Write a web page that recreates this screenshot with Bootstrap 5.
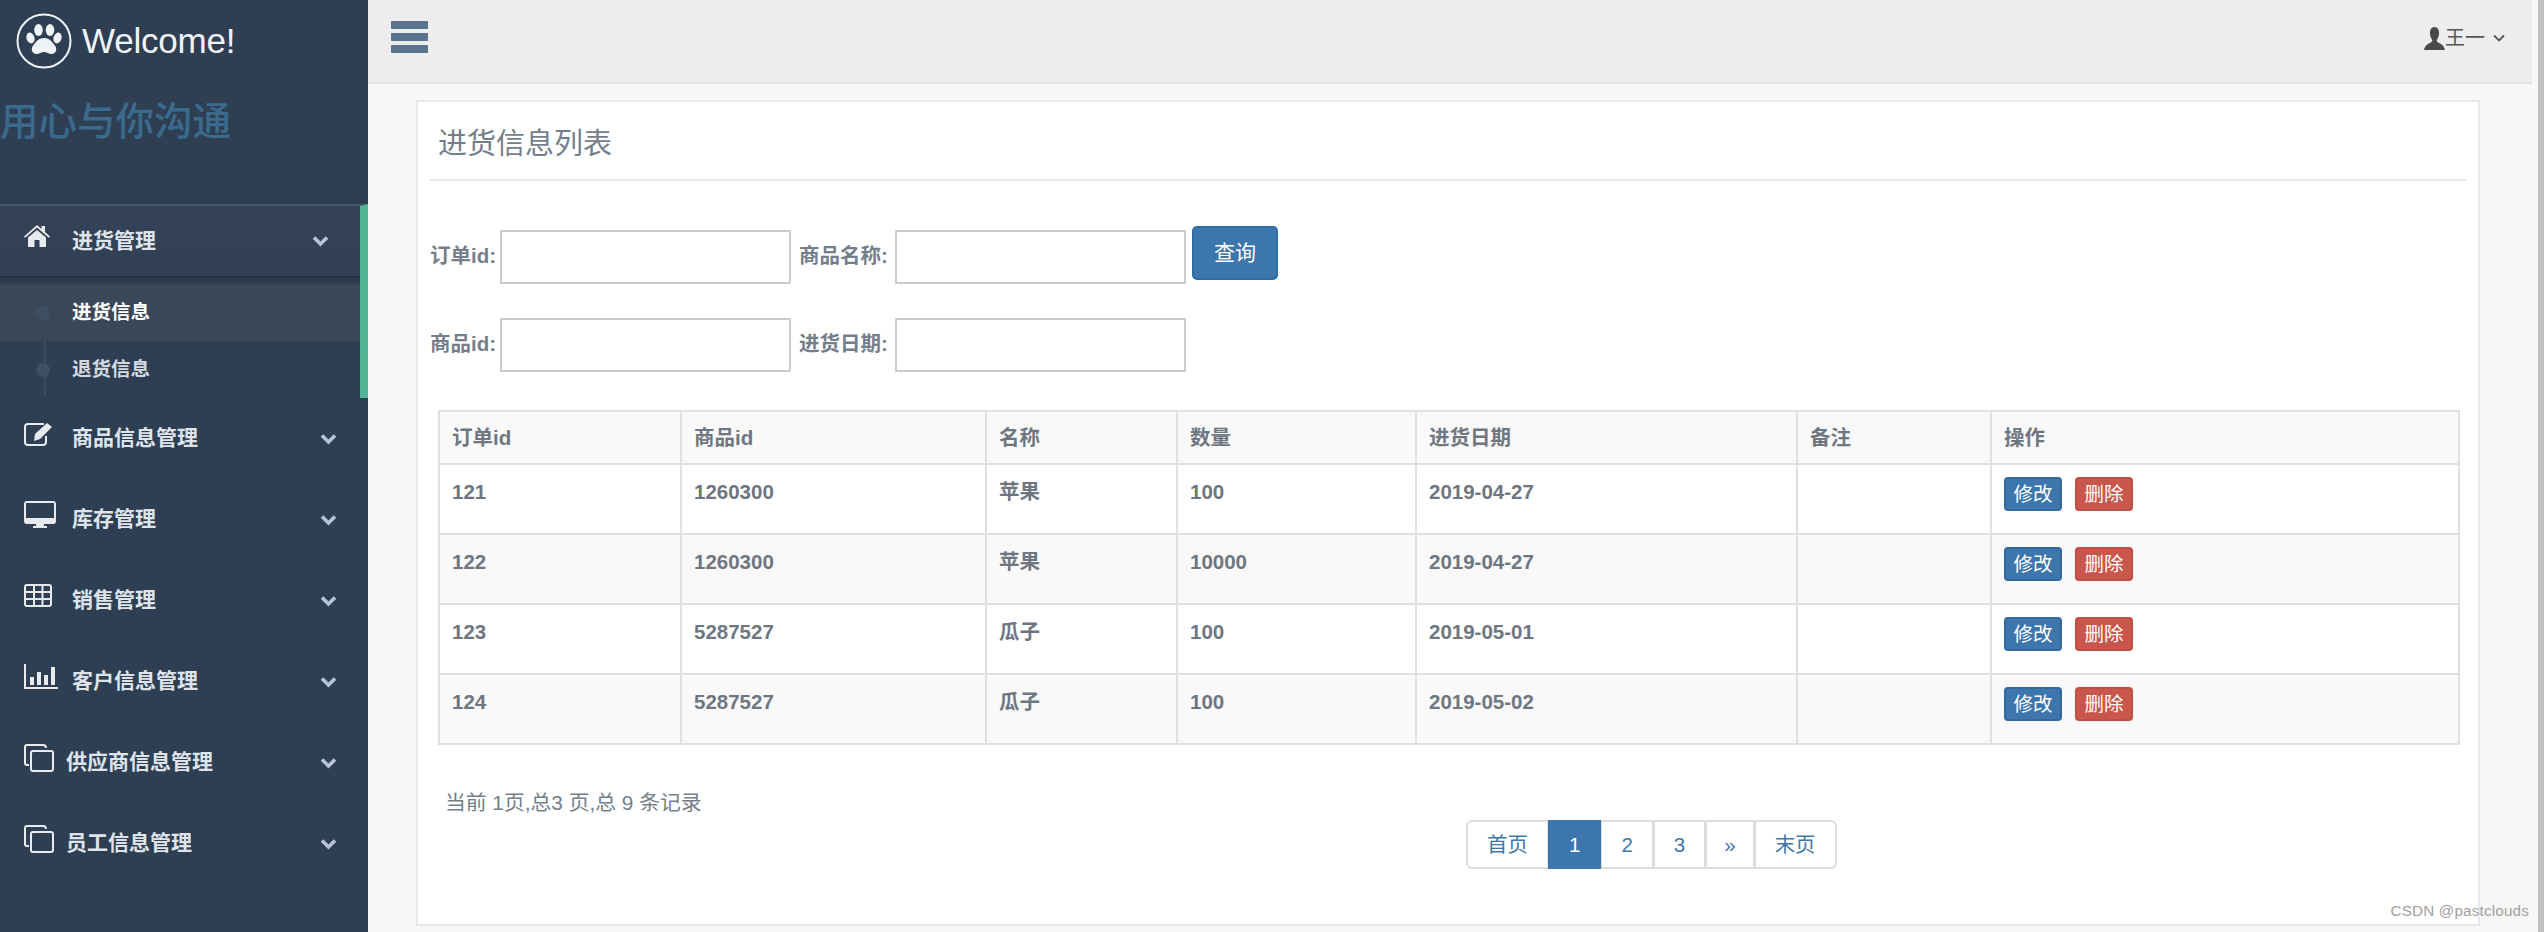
<!DOCTYPE html>
<html lang="zh-CN">
<head>
  <meta charset="UTF-8">
  <meta name="viewport" content="width=device-width, initial-scale=1">
  <title>进货信息列表</title>
  <link href="https://cdn.jsdelivr.net/npm/bootstrap@5.3.0/dist/css/bootstrap.min.css" rel="stylesheet">
  <style>
    html, body { height: 100%; }
    body {
      font-family: "Liberation Sans", "Noto Sans CJK SC", sans-serif;
      background: #f7f7f7;
      color: #747f8b;
      overflow: hidden;
    }
    .app-shell { height: 932px; }
    .side-col { width: 368px; background: #2e3f53; flex: none; }
    .brand-row { height: 82px; padding-left: 16px; gap: 10px; }
    .brand-name { font-size: 35px; color: #eef3f8; letter-spacing: -.2px; }
    .motto { height: 122px; margin: 0; padding-top: 13px; font-size: 38.5px; line-height: 54px; color: #3c6a8c; }
    .menu-open { border-top: 2px solid #47566a; border-right: 8px solid #52b596; height: 194px; }
    .menu-head {
      height: 72px; padding-left: 24px; padding-right: 31px;
      background: linear-gradient(#344357, #303f53);
      border-bottom: 2px solid #233245;
      box-shadow: 0 4px 0 #2b3a4d;
    }
    .menu-row { height: 81px; padding-left: 24px; padding-right: 31px; }
    .menu-label { font-size: 21px; font-weight: 700; color: #dfe4ea; line-height: 30px; }
    .menu-row .menu-label { margin-top: -2px; }
    .menu-ico { flex: none; margin-top: -10px; color: #e7eaee; }
    .ico-wide { width: 48px; }
    .ico-narrow { width: 42px; }
    .chev { flex: none; color: #b6c4d6; }
    .sub-list { position: relative; padding-top: 6px; }
    .sub-list::before { content: ""; position: absolute; left: 44px; top: 6px; bottom: 2px; width: 2px; background: #3b4b5f; }
    .sub-item { height: 57px; position: relative; padding-left: 72px; font-size: 19.5px; font-weight: 700; color: #d3d9e0; }
    .sub-item::before { content: ""; position: absolute; left: 36px; top: 50%; width: 14px; height: 14px; margin-top: -7px; border-radius: 50%; background: #3f4f63; }
    .sub-on { background: #3a4759; color: #fff; }
    .main-col { min-width: 0; }
    .top-strip { height: 84px; background: #ededed; border-bottom: 2px solid #dfe2e6; padding: 0 27px 0 23px; }
    .burger { width: 37px; gap: 4px; margin-top: -8px; }
    .burger span { display: block; height: 8px; background: #5a738e; border-radius: 1px; }
    .user-box { font-size: 20px; color: #555; margin-top: -6px; }
    .list-panel { margin: 16px 52px 0 48px; height: 826px; background: #fff; border: 2px solid #e6e9ed; padding: 0 12px; }
    .panel-title { height: 79px; border-bottom: 2px solid #e6e9ed; font-size: 29px; padding-left: 8px; padding-top: 8px; margin: 0; font-weight: 400; line-height: 1.2; }
    .filter-row { gap: 4px; }
    .filter-row label { font-size: 20.5px; font-weight: 700; width: 66px; white-space: nowrap; margin-right: 0; margin-top: -2px; }
    .filter-row label.lbl-long { width: 92px; }
    .filter-row input { width: 291px; height: 54px; border: 2px solid #ccc; background: #fff; border-radius: 1px; }
    .first-filter { margin-top: 49px; height: 54px; }
    .second-filter { margin-top: 34px; height: 54px; }
    .input-gap { margin-right: 4px; }
    .query-btn { width: 86px; height: 54px; font-size: 21px; margin-top: -8px; margin-left: 2px; padding: 0; background: #3c76ad; border: 2px solid #2e6da4; border-radius: 5px; }
    .goods-table { width: 2022px; margin: 38px 0 0 8px; table-layout: fixed; border-collapse: collapse; border: 2px solid #ddd; }
    .goods-table th, .goods-table td { border: 2px solid #e0e0e0; font-size: 20.5px; font-weight: 700; line-height: 30px; color: #6e7781; }
    .goods-table th { height: 53px; padding: 0 12px; background: #f9f9f9; vertical-align: middle; }
    .goods-table td { height: 70px; padding: 12px; vertical-align: top; background: #fff; }
    .goods-table tbody tr:nth-child(even) td { background: #f9f9f9; }
    .goods-table th:nth-child(1) { width: 242px; }
    .goods-table th:nth-child(2) { width: 305px; }
    .goods-table th:nth-child(3) { width: 191px; }
    .goods-table th:nth-child(4) { width: 239px; }
    .goods-table th:nth-child(5) { width: 381px; }
    .goods-table th:nth-child(6) { width: 194px; }
    .act-btn { width: 58px; height: 34px; padding: 0; font-size: 19.5px; line-height: 30px; border-radius: 4px; display: inline-block; vertical-align: top; }
    .act-edit { background: #3c76ad; border: 2px solid #35699b; margin-right: 13px; }
    .act-del { background: #c9564c; border: 2px solid #c14e45; }
    .page-info { margin: 43px 0 0 15px; font-size: 20.8px; line-height: 30px; }
    .pager-wrap { padding-left: 1036px; margin-top: 2px; }
    .pager-wrap .pagination {
      --bs-pagination-padding-x: 19px;
      --bs-pagination-padding-y: 8px;
      --bs-pagination-font-size: 20.5px;
      --bs-pagination-color: #3f77a8;
      --bs-pagination-border-color: #ddd;
      --bs-pagination-border-width: 2px;
      --bs-pagination-active-bg: #3c76ad;
      --bs-pagination-active-border-color: #3c76ad;
      --bs-pagination-border-radius: 6px;
      margin: 0;
    }
    .pager-wrap .page-link { height: 49px; line-height: 29px; }
    .pager-wrap .page-item:nth-child(5) .page-link { padding-left: 17px; padding-right: 17px; }
    .scroll-edge { width: 12px; flex: none; background: #f7f7f7; border-right: 6px solid #c0c0c0; }
    .mark-csdn { position: absolute; right: 15px; bottom: 9px; font-size: 15.2px; color: #a0a0a0; letter-spacing: .2px; }
  </style>
</head>
<body>

<div class="app-shell d-flex position-relative">

  <!-- Sidebar -->
  <aside class="side-col d-flex flex-column">
    <div class="brand-row d-flex align-items-center">
      <svg width="56" height="56" viewBox="0 0 56 56">
        <circle cx="28" cy="28" r="26.5" fill="none" stroke="#eef3f8" stroke-width="2"/>
        <g fill="#eef3f8">
          <ellipse cx="14.5" cy="25" rx="4" ry="5.5" transform="rotate(-18 14.5 25)"/>
          <ellipse cx="22.5" cy="17" rx="4.300" ry="6"/>
          <ellipse cx="34" cy="17" rx="4.300" ry="6"/>
          <ellipse cx="41.500" cy="25" rx="4" ry="5.5" transform="rotate(18 41.500 25)"/>
          <path d="M28 25c-6 0-8 4-10.500 7-3 3-2 9 3 9 3 0 4.500-2 7.500-2s4.500 2 7.500 2c5 0 6-6 3-9-2.500-3-4.500-7-10.500-7z"/>
        </g>
      </svg>
      <span class="brand-name">Welcome!</span>
    </div>
    <h2 class="motto">用心与你沟通</h2>

    <div class="menu-open">
      <div class="menu-head d-flex align-items-center">
        <svg class="menu-ico ico-wide" width="48" height="22" viewBox="0 0 48 22" fill="currentColor"><path d="M13 0 0 11.500l1.200 1.300L13 2.600l11.800 10.200 1.200-1.300L21 7V1h-3.500v3z"/><path d="M13 5 4 12.500V22h6.500v-7h5v7H22v-9.500z"/></svg>
        <span class="menu-label flex-grow-1">进货管理</span>
        <svg class="chev" width="17" height="12" viewBox="0 0 17 12"><path d="M2 2.500l6.500 6.500L15 2.500" fill="none" stroke="currentColor" stroke-width="3.600"/></svg>
      </div>
      <div class="sub-list">
        <div class="sub-item sub-on d-flex align-items-center">进货信息</div>
        <div class="sub-item d-flex align-items-center">退货信息</div>
      </div>
    </div>

    <div class="menu-row d-flex align-items-center">
      <span class="ico-wide menu-ico d-flex"><svg width="30" height="25" viewBox="0 0 30 25" fill="none" stroke="currentColor" stroke-width="2"><path d="M20 3H4a3 3 0 0 0-3 3v15a3 3 0 0 0 3 3h15a3 3 0 0 0 3-3v-6"/><path d="M11 13 23 2l5 4-12 12-6 2z" fill="currentColor" stroke="none"/></svg></span>
      <span class="menu-label flex-grow-1">商品信息管理</span>
      <svg class="chev" width="17" height="12" viewBox="0 0 17 12"><path d="M2 2.500l6.500 6.500L15 2.500" fill="none" stroke="currentColor" stroke-width="3.600"/></svg>
    </div>
    <div class="menu-row d-flex align-items-center">
      <span class="ico-wide menu-ico d-flex"><svg width="32" height="27" viewBox="0 0 32 27"><path d="M3 0h26a3 3 0 0 1 3 3v17a3 3 0 0 1-3 3H20v2h3v2H9v-2h3v-2H3a3 3 0 0 1-3-3V3a3 3 0 0 1 3-3z" fill="currentColor"/><rect x="2" y="2" width="28" height="15" fill="#2e3f53"/></svg></span>
      <span class="menu-label flex-grow-1">库存管理</span>
      <svg class="chev" width="17" height="12" viewBox="0 0 17 12"><path d="M2 2.500l6.500 6.500L15 2.500" fill="none" stroke="currentColor" stroke-width="3.600"/></svg>
    </div>
    <div class="menu-row d-flex align-items-center">
      <span class="ico-wide menu-ico d-flex"><svg width="28" height="23" viewBox="0 0 28 23" fill="none" stroke="currentColor" stroke-width="2"><rect x="1" y="1" width="26" height="21" rx="2"/><path d="M1 8h26M1 15h26M10 1V22M18.500 1V22"/></svg></span>
      <span class="menu-label flex-grow-1">销售管理</span>
      <svg class="chev" width="17" height="12" viewBox="0 0 17 12"><path d="M2 2.500l6.500 6.500L15 2.500" fill="none" stroke="currentColor" stroke-width="3.600"/></svg>
    </div>
    <div class="menu-row d-flex align-items-center">
      <span class="ico-wide menu-ico d-flex"><svg width="34" height="25" viewBox="0 0 34 25" fill="currentColor"><path d="M0 0h2v23h32v2H0z"/><rect x="6" y="13" width="4" height="8"/><rect x="13" y="8" width="4" height="13"/><rect x="20" y="11" width="4" height="10"/><rect x="27" y="3" width="4" height="18"/></svg></span>
      <span class="menu-label flex-grow-1">客户信息管理</span>
      <svg class="chev" width="17" height="12" viewBox="0 0 17 12"><path d="M2 2.500l6.500 6.500L15 2.500" fill="none" stroke="currentColor" stroke-width="3.600"/></svg>
    </div>
    <div class="menu-row d-flex align-items-center">
      <span class="ico-narrow menu-ico d-flex"><svg width="30" height="28" viewBox="0 0 30 28" fill="none" stroke="currentColor" stroke-width="2"><rect x="7" y="7" width="22" height="20" rx="2"/><path d="M5 21H3a2 2 0 0 1-2-2V3a2 2 0 0 1 2-2h16a3 3 0 0 1 3 3"/></svg></span>
      <span class="menu-label flex-grow-1">供应商信息管理</span>
      <svg class="chev" width="17" height="12" viewBox="0 0 17 12"><path d="M2 2.500l6.500 6.500L15 2.500" fill="none" stroke="currentColor" stroke-width="3.600"/></svg>
    </div>
    <div class="menu-row d-flex align-items-center">
      <span class="ico-narrow menu-ico d-flex"><svg width="30" height="28" viewBox="0 0 30 28" fill="none" stroke="currentColor" stroke-width="2"><rect x="7" y="7" width="22" height="20" rx="2"/><path d="M5 21H3a2 2 0 0 1-2-2V3a2 2 0 0 1 2-2h16a3 3 0 0 1 3 3"/></svg></span>
      <span class="menu-label flex-grow-1">员工信息管理</span>
      <svg class="chev" width="17" height="12" viewBox="0 0 17 12"><path d="M2 2.500l6.500 6.500L15 2.500" fill="none" stroke="currentColor" stroke-width="3.600"/></svg>
    </div>
  </aside>

  <!-- Main -->
  <main class="main-col flex-grow-1">
    <div class="top-strip d-flex align-items-center justify-content-between">
      <div class="burger d-flex flex-column"><span></span><span></span><span></span></div>
      <div class="user-box d-flex align-items-center">
        <svg width="21" height="23" viewBox="0 0 23 23" fill="#4a4a4a" preserveAspectRatio="none"><path d="M11.500 0C8 0 6.500 3 6.500 6c0 3 1.500 5.500 2.500 7 .4 1-.5 2-2 2.700C4 17 1 18.500 0 23h23c-1-4.500-4-6-7-7.300-1.500-.7-2.400-1.700-2-2.700 1-1.500 2.500-4 2.500-7 0-3-1.500-6-5-6z"/></svg>
        <span>王一</span>
        <svg class="ms-2" width="12" height="8" viewBox="0 0 12 8"><path d="M1 1.500l5 5 5-5" fill="none" stroke="#555" stroke-width="1.800"/></svg>
      </div>
    </div>

    <section class="list-panel">
      <h4 class="panel-title d-flex align-items-center">进货信息列表</h4>

      <form>
        <div class="filter-row first-filter d-flex align-items-center">
          <label>订单id:</label><input type="text" class="input-gap">
          <label class="lbl-long">商品名称:</label><input type="text">
          <button type="button" class="btn btn-primary query-btn">查询</button>
        </div>
        <div class="filter-row second-filter d-flex align-items-center">
          <label>商品id:</label><input type="text" class="input-gap">
          <label class="lbl-long">进货日期:</label><input type="text">
        </div>
      </form>

      <table class="table goods-table">
        <thead>
          <tr><th>订单id</th><th>商品id</th><th>名称</th><th>数量</th><th>进货日期</th><th>备注</th><th>操作</th></tr>
        </thead>
        <tbody>
          <tr>
            <td>121</td><td>1260300</td><td>苹果</td><td>100</td><td>2019-04-27</td><td></td>
            <td><button class="btn btn-primary act-btn act-edit">修改</button><button class="btn btn-danger act-btn act-del">删除</button></td>
          </tr>
          <tr>
            <td>122</td><td>1260300</td><td>苹果</td><td>10000</td><td>2019-04-27</td><td></td>
            <td><button class="btn btn-primary act-btn act-edit">修改</button><button class="btn btn-danger act-btn act-del">删除</button></td>
          </tr>
          <tr>
            <td>123</td><td>5287527</td><td>瓜子</td><td>100</td><td>2019-05-01</td><td></td>
            <td><button class="btn btn-primary act-btn act-edit">修改</button><button class="btn btn-danger act-btn act-del">删除</button></td>
          </tr>
          <tr>
            <td>124</td><td>5287527</td><td>瓜子</td><td>100</td><td>2019-05-02</td><td></td>
            <td><button class="btn btn-primary act-btn act-edit">修改</button><button class="btn btn-danger act-btn act-del">删除</button></td>
          </tr>
        </tbody>
      </table>

      <p class="page-info mb-0">当前 1页,总3 页,总 9 条记录</p>
      <nav class="pager-wrap">
        <ul class="pagination">
          <li class="page-item"><a class="page-link" href="#">首页</a></li>
          <li class="page-item active"><a class="page-link" href="#">1</a></li>
          <li class="page-item"><a class="page-link" href="#">2</a></li>
          <li class="page-item"><a class="page-link" href="#">3</a></li>
          <li class="page-item"><a class="page-link" href="#">»</a></li>
          <li class="page-item"><a class="page-link" href="#">末页</a></li>
        </ul>
      </nav>
    </section>
  </main>

  <div class="scroll-edge"></div>
  <div class="mark-csdn">CSDN @pastclouds</div>
</div>

<script src="https://cdn.jsdelivr.net/npm/bootstrap@5.3.0/dist/js/bootstrap.bundle.min.js"></script>
</body>
</html>
